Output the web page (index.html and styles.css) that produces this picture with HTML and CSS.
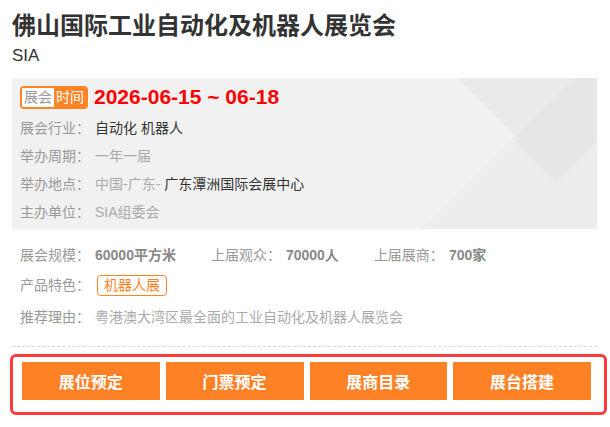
FILE: index.html
```html
<!DOCTYPE html>
<html>
<head>
    <title>佛山国际工业自动化及机器人展览会</title>
    <link rel="stylesheet" href="styles.css">
</head>
<body>
    <div class="page">
        <h1 class="title">佛山国际工业自动化及机器人展览会</h1>
        <div class="subtitle">SIA</div>

        <div class="info-box">
            <svg class="info-bg" viewBox="0 0 585 151" preserveAspectRatio="none">
                <polygon points="560,0 585,0 585,151 409,151" fill="#ededed"/>
                <polygon points="445,0 563,0 504,59" fill="#ebebeb"/>
                <polygon points="563,0 585,0 585,63 544,104 501,61" fill="#e7e7e7"/>
            </svg>
            <div class="date-row">
                <span class="badge"><span class="badge-l">展会</span><span class="badge-r">时间</span></span>
                <span class="date">2026-06-15 ~ 06-18</span>
            </div>
            <div class="row"><span class="label">展会行业：</span><span class="dark">自动化 机器人</span></div>
            <div class="row"><span class="label">举办周期：</span><span class="light">一年一届</span></div>
            <div class="row"><span class="label">举办地点：</span><span class="light">中国-广东- </span><span class="dark">广东潭洲国际会展中心</span></div>
            <div class="row"><span class="label">主办单位：</span><span class="light">SIA组委会</span></div>
        </div>

        <div class="stats">
            <div class="stat"><span class="label">展会规模：</span><b>60000平方米</b></div>
            <div class="stat"><span class="label">上届观众：</span><b>70000人</b></div>
            <div class="stat"><span class="label">上届展商：</span><b>700家</b></div>
        </div>
        <div class="line"><span class="label">产品特色：</span><span class="tag">机器人展</span></div>
        <div class="line reason"><span class="label">推荐理由：</span><span class="light">粤港澳大湾区最全面的工业自动化及机器人展览会</span></div>

        <div class="divider"></div>

        <div class="actions">
            <button class="btn">展位预定</button>
            <button class="btn">门票预定</button>
            <button class="btn">展商目录</button>
            <button class="btn">展台搭建</button>
        </div>
    </div>
</body>
</html>
```

FILE: styles.css
```css
body {
    margin: 0;
    background-color: #fff;
    font-family: "Liberation Sans", "Noto Sans CJK SC", sans-serif;
    color: #333;
}
.page {
    padding: 10px 13px 0 12px;
}
.title {
    margin: 0;
    font-size: 24px;
    line-height: 32px;
    font-weight: bold;
    color: #333;
}
.subtitle {
    margin-top: 4px;
    font-size: 17px;
    line-height: 20px;
    color: #333;
}

/* grey info block */
.info-box {
    position: relative;
    margin-top: 12px;
    padding: 7px 8px 3px 8px;
    background-color: #f1f1f1;
}
.info-bg {
    position: absolute;
    top: 0;
    left: 0;
    width: 100%;
    height: 100%;
}
.date-row,
.row {
    position: relative;
}
.date-row {
    display: flex;
    align-items: center;
    height: 24px;
    margin-bottom: 5px;
}
.badge {
    display: flex;
    border: 2px solid #ff8426;
    border-radius: 4px;
    overflow: hidden;
    font-size: 14px;
    line-height: 19px;
}
.badge-l {
    padding: 0 2px;
    background-color: #fff;
    color: #999;
}
.badge-r {
    padding: 0 2px;
    background-color: #ff8426;
    color: #fff;
}
.date {
    margin-left: 6px;
    font-size: 21px;
    line-height: 24px;
    font-weight: bold;
    color: #ff0000;
}
.row {
    font-size: 14px;
    line-height: 28px;
}
.label {
    display: inline-block;
    width: 75px;
    color: #999;
}
.dark {
    color: #333;
}
.light {
    color: #aaa;
}

/* below the block */
.stats {
    display: flex;
    margin-top: 11px;
    padding-left: 8px;
    font-size: 14px;
    line-height: 30px;
}
.stat {
    margin-right: 35px;
}
.stat b {
    color: #888;
}
.line {
    padding-left: 8px;
    font-size: 14px;
    line-height: 30px;
}
.reason {
    margin-top: 2px;
}
.tag {
    display: inline-block;
    margin-left: 2px;
    padding: 0 6px;
    border: 1px solid #ff8426;
    border-radius: 4px;
    line-height: 19px;
    color: #ff8426;
}
.divider {
    margin-top: 14px;
    border-top: 1px dashed #d9d9d9;
}

/* buttons */
.actions {
    display: grid;
    grid-template-columns: repeat(4, 1fr);
    gap: 6px;
    margin: 7px -10px 0 -2px;
    padding: 5px 13px 12px 9px;
    border: 3px solid #ff3a3a;
    border-radius: 6px;
}
.btn {
    height: 38px;
    border: none;
    background-color: #fe8125;
    color: #fff;
    font-family: "Liberation Sans", "Noto Sans CJK SC", sans-serif;
    font-size: 16px;
    font-weight: bold;
    padding: 0;
}
```
